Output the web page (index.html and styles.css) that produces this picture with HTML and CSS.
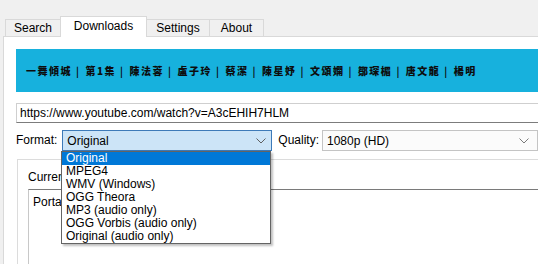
FILE: index.html
```html
<!DOCTYPE html>
<html>
<head>
<meta charset="utf-8">
<link rel="stylesheet" href="styles.css">
</head>
<body>
<div class="tabs">
  <div class="tab t-search">Search</div>
  <div class="tab t-downloads active">Downloads</div>
  <div class="tab t-settings">Settings</div>
  <div class="tab t-about">About</div>
</div>
<div class="panel">
  <div class="banner">
    <span>一舞傾城</span><span class="sep">|</span><span>第1集</span><span class="sep">|</span><span>陳法蓉</span><span class="sep">|</span><span>盧子玲</span><span class="sep">|</span><span>蔡潔</span><span class="sep">|</span><span>陳星妤</span><span class="sep">|</span><span>文頌嫻</span><span class="sep">|</span><span>鄒琛楣</span><span class="sep">|</span><span>唐文龍</span><span class="sep">|</span><span>楊明</span>
  </div>
  <div class="url">https://www.youtube.com/watch?v=A3cEHIH7HLM</div>
  <div class="row">
    <span class="label">Format:</span>
    <div class="combo format">
      <span>Original</span>
      <svg class="chev" width="10" height="6" viewBox="0 0 10 6"><path d="M0.5 0.5 L5 5 L9.5 0.5" stroke="#5f5f5f" stroke-width="1" fill="none"/></svg>
    </div>
    <span class="label quality-label">Quality:</span>
    <div class="combo quality">
      <span>1080p (HD)</span>
      <svg class="chev" width="10" height="6" viewBox="0 0 10 6"><path d="M0.5 0.5 L5 5 L9.5 0.5" stroke="#7a7a7a" stroke-width="1" fill="none"/></svg>
    </div>
    <ul class="dropdown">
      <li class="sel">Original</li>
      <li>MPEG4</li>
      <li>WMV (Windows)</li>
      <li>OGG Theora</li>
      <li>MP3 (audio only)</li>
      <li>OGG Vorbis (audio only)</li>
      <li>Original (audio only)</li>
    </ul>
  </div>
  <div class="group">
    <div class="glabel">Current download:</div>
    <div class="textbox"><span class="clip">Portable video</span></div>
  </div>
</div>
</body>
</html>
```
FILE: styles.css
```css
html, body {
  margin: 0;
  padding: 0;
}
body {
  width: 538px;
  height: 264px;
  overflow: hidden;
  background: #f0f0f0;
  font-family: "Liberation Sans", Arial, sans-serif;
  font-size: 12px;
  color: #000;
}
.tabs {
  display: flex;
  align-items: flex-end;
  height: 36px;
  padding-left: 5px;
}
.tab {
  box-sizing: border-box;
  height: 17px;
  border: 1px solid #d9d9d9;
  border-bottom: none;
  background: #f0f0f0;
  text-align: center;
  line-height: 16px;
  margin-left: -1px;
  font-size: 12px;
}
.t-search { width: 56px; margin-left: 0; }
.t-downloads { width: 87px; }
.t-settings { width: 64px; }
.t-about { width: 55px; }
.tab.active {
  position: relative;
  z-index: 1;
  height: 21px;
  margin-bottom: -1px;
  background: #fff;
  line-height: 18px;
}
.panel {
  margin-left: 3px;
  width: 535px;
  height: 228px;
  box-sizing: border-box;
  border-left: 1px solid #d9d9d9;
  border-top: 1px solid #d9d9d9;
  background: #fff;
  padding: 12px 0 0 12px;
  position: relative;
  overflow: hidden;
}
.banner {
  height: 43px;
  background: #17b1dd;
  display: flex;
  align-items: center;
  padding-left: 10px;
  font-family: "Noto Sans CJK TC", "Noto Sans CJK SC", sans-serif;
  font-weight: 900;
  font-size: 10px;
  letter-spacing: 1.5px;
  color: #0d0d0d;
  white-space: nowrap;
}
.sep {
  margin: 0 5px 0 4px;
  font-weight: 700;
}
.url {
  margin-top: 11px;
  height: 20px;
  box-sizing: border-box;
  border: 1px solid #cfcfcf;
  border-right: none;
  border-bottom-color: #7c7c7c;
  padding-left: 3px;
  line-height: 18px;
  white-space: nowrap;
}
.row {
  margin-top: 7px;
  display: flex;
  align-items: center;
  height: 21px;
  position: relative;
}
.label {
  line-height: 21px;
}
.combo {
  box-sizing: border-box;
  height: 21px;
  display: flex;
  align-items: center;
  justify-content: space-between;
  padding: 0 5px 0 4px;
}
.combo.format {
  margin-left: 5px;
  width: 210px;
  background: #cce4f7;
  border: 1px solid #3d7ab8;
}
.quality-label {
  margin-left: 6px;
}
.combo.quality {
  margin-left: 3px;
  width: 216px;
  background: #fbfbfb;
  border: 1px solid #c4c4c4;
  padding-right: 8px;
}
.dropdown {
  position: absolute;
  left: 45px;
  top: 21px;
  width: 210px;
  box-sizing: border-box;
  margin: 0;
  padding: 0;
  list-style: none;
  background: #fff;
  border: 1px solid #646464;
  box-shadow: 2px 2px 2px rgba(0,0,0,0.25);
  z-index: 5;
}
.dropdown li {
  height: 13px;
  line-height: 12px;
  padding-left: 4px;
  white-space: nowrap;
}
.dropdown li.sel {
  background: #0078d7;
  color: #fff;
}
.group {
  margin-top: 8px;
  margin-left: 1px;
  height: 120px;
  border-left: 1px solid #dcdcdc;
  border-top: 1px solid #dcdcdc;
  padding: 10px 0 0 10px;
}
.glabel {
  line-height: 14px;
  white-space: nowrap;
  width: 33px;
  overflow: hidden;
}
.textbox {
  margin-top: 5px;
  height: 100px;
  border-top: 1px solid #7a7a7a;
  border-left: 1px solid #c8c8c8;
  padding: 5px 0 0 4px;
  white-space: nowrap;
}
.clip {
  display: block;
  width: 28px;
  overflow: hidden;
}
```
